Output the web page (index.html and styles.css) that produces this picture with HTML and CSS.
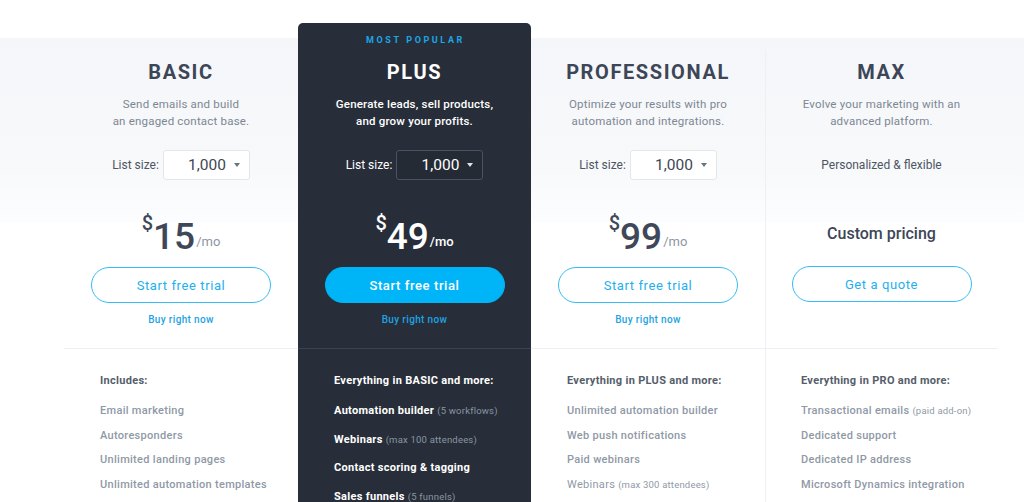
FILE: index.html
```html
<!DOCTYPE html>
<html lang="en">
<head>
<meta charset="utf-8">
<title>Pricing</title>
<link rel="stylesheet" href="styles.css">
</head>
<body>
<section class="pricing">
  <div class="plans">
    <div class="plan">
      <div class="plan-top">
        <div class="eyebrow"></div>
        <h2 class="plan-name">BASIC</h2>
        <p class="plan-desc">Send emails and build<br>an engaged contact base.</p>
        <div class="size-row"><span class="size-label">List size:</span><span class="select">1,000<i class="caret"></i></span></div>
        <div class="price"><span class="cur">$</span><span class="amt">15</span><span class="per">/mo</span></div>
        <a class="btn">Start free trial</a>
        <a class="buy">Buy right now</a>
      </div>
      <div class="features">
        <div class="feat-head">Includes:</div>
        <ul>
          <li>Email marketing</li>
          <li>Autoresponders</li>
          <li>Unlimited landing pages</li>
          <li>Unlimited automation templates</li>
        </ul>
      </div>
    </div>

    <div class="plan plan-dark">
      <div class="plan-top">
        <div class="eyebrow">MOST POPULAR</div>
        <h2 class="plan-name">PLUS</h2>
        <p class="plan-desc">Generate leads, sell products,<br>and grow your profits.</p>
        <div class="size-row"><span class="size-label">List size:</span><span class="select">1,000<i class="caret"></i></span></div>
        <div class="price"><span class="cur">$</span><span class="amt">49</span><span class="per">/mo</span></div>
        <a class="btn btn-fill">Start free trial</a>
        <a class="buy">Buy right now</a>
      </div>
      <div class="features">
        <div class="feat-head">Everything in BASIC and more:</div>
        <ul>
          <li>Automation builder <small>(5 workflows)</small></li>
          <li>Webinars <small>(max 100 attendees)</small></li>
          <li>Contact scoring &amp; tagging</li>
          <li>Sales funnels <small>(5 funnels)</small></li>
        </ul>
      </div>
    </div>

    <div class="plan">
      <div class="plan-top">
        <div class="eyebrow"></div>
        <h2 class="plan-name">PROFESSIONAL</h2>
        <p class="plan-desc">Optimize your results with pro<br>automation and integrations.</p>
        <div class="size-row"><span class="size-label">List size:</span><span class="select">1,000<i class="caret"></i></span></div>
        <div class="price"><span class="cur">$</span><span class="amt">99</span><span class="per">/mo</span></div>
        <a class="btn">Start free trial</a>
        <a class="buy">Buy right now</a>
      </div>
      <div class="features">
        <div class="feat-head">Everything in PLUS and more:</div>
        <ul>
          <li>Unlimited automation builder</li>
          <li>Web push notifications</li>
          <li>Paid webinars</li>
          <li class="light">Webinars <small>(max 300 attendees)</small></li>
        </ul>
      </div>
    </div>

    <div class="plan plan-max">
      <div class="plan-top">
        <div class="eyebrow"></div>
        <h2 class="plan-name">MAX</h2>
        <p class="plan-desc">Evolve your marketing with an<br>advanced platform.</p>
        <div class="size-row"><span class="flex-note">Personalized &amp; flexible</span></div>
        <div class="price"><span class="custom">Custom pricing</span></div>
        <a class="btn btn-quote">Get a quote</a>
        <span class="buy"></span>
      </div>
      <div class="features">
        <div class="feat-head">Everything in PRO and more:</div>
        <ul>
          <li>Transactional emails <small>(paid add-on)</small></li>
          <li>Dedicated support</li>
          <li>Dedicated IP address</li>
          <li>Microsoft Dynamics integration</li>
        </ul>
      </div>
    </div>
  </div>
</section>
</body>
</html>
```

FILE: styles.css
```css
* { box-sizing: border-box; }
html, body { margin: 0; padding: 0; }
body {
  background: #fff;
  font-family: Roboto, "Liberation Sans", Arial, sans-serif;
  color: #3d4656;
  height: 502px;
  overflow: hidden;
}
.pricing {
  padding-top: 23px;
  background: linear-gradient(to bottom, #fff 0, #fff 38px, #f4f6f9 38px, #f8f9fb 170px, #fcfdfe 222px, #fff 223px);
  min-height: 502px;
}
.plans {
  margin-left: 64px;
  display: grid;
  grid-template-columns: 234px 233px 234px 233px;
}
.plan { display: flex; flex-direction: column; }
.plan-top {
  display: flex;
  flex-direction: column;
  align-items: center;
  text-align: center;
  padding-top: 12px;
  height: 326px;
  border-bottom: 1px solid #edf1f7;
}
.eyebrow {
  height: 10px;
  font-size: 9px;
  line-height: 10px;
  font-weight: 700;
  letter-spacing: 2.6px;
  color: #1aa7e6;
  padding-left: 2px;
}
.plan-name {
  margin: 15px 0 0;
  font-size: 20px;
  line-height: 24px;
  font-weight: 700;
  letter-spacing: 1.6px;
  color: #3c4657;
}
.plan-desc {
  margin: 12px 0 0;
  font-size: 11.5px;
  line-height: 17px;
  color: #7d8794;
  letter-spacing: 0.2px;
}
.size-row {
  margin-top: 20px;
  height: 30px;
  display: flex;
  align-items: center;
  gap: 4px;
}
.size-label { font-size: 12px; color: #4d5562; }
.select {
  width: 87px;
  height: 30px;
  border: 1px solid #e3e7ed;
  border-radius: 3px;
  background: #fff;
  display: flex;
  align-items: center;
  justify-content: flex-end;
  padding-right: 9px;
  font-size: 15.5px;
  color: #3d4656;
  gap: 8px;
}
.caret {
  width: 0; height: 0;
  border-left: 3.5px solid transparent;
  border-right: 3.5px solid transparent;
  border-top: 4px solid #6b7482;
}
.flex-note { font-size: 12px; color: #4d5562; }
.price {
  margin-top: 31px;
  height: 40px;
  display: flex;
  align-items: flex-end;
  justify-content: center;
  color: #3f4859;
}
.cur { font-size: 20px; font-weight: 500; align-self: flex-start; line-height: 22px; margin-top: 1px; }
.amt { font-size: 37px; font-weight: 500; line-height: 40px; margin-bottom: -6px; }
.per { font-size: 13px; color: #8d97a4; line-height: 18px; margin-left: 1px; }
.custom { font-size: 16px; font-weight: 500; color: #3d4656; align-self: center; margin-top: 4px; }
.btn {
  margin-top: 16px;
  width: 180px;
  height: 36px;
  border: 1px solid #35bcf5;
  border-radius: 18px;
  display: flex;
  align-items: center;
  justify-content: center;
  font-size: 13px;
  letter-spacing: 0.6px;
  color: #22b0ee;
  cursor: pointer;
}
.btn-quote { margin-top: 15px; }
.btn-fill {
  background: #00b4f8;
  border-color: #00b4f8;
  color: #fff;
  font-weight: 500;
}
.buy {
  margin-top: 11px;
  font-size: 10px;
  line-height: 12px;
  height: 12px;
  color: #1ea3e3;
  font-weight: 500;
  letter-spacing: 0.35px;
}
.features {
  padding: 25px 0 0 36px;
  font-size: 11px;
  letter-spacing: 0.3px;
}
.feat-head {
  font-weight: 700;
  color: #555e6b;
  line-height: 14px;
}
.features ul { list-style: none; margin: 16px 0 0; padding: 0; }
.features li {
  line-height: 14px;
  height: 24.7px;
  font-weight: 500;
  color: #8f99a6;
}
.features li.light { font-weight: 400; }
.features small { font-size: 9.5px; font-weight: 400; letter-spacing: 0.2px; }
.plan-dark {
  background: #272e39;
  border-radius: 5px 5px 0 0;
}
.plan-dark .plan-top { border-bottom-color: #3a4350; }
.plan-dark .plan-name { color: #fff; }
.plan-dark .plan-desc { color: #fff; font-weight: 500; }
.plan-dark .size-label { color: #fff; }
.plan-dark .select {
  background: #252b35;
  border-color: #4a5361;
  color: #fff;
}
.plan-dark .caret { border-top-color: #dfe3e8; }
.plan-dark .price, .plan-dark .per { color: #fff; }
.plan-dark .per { font-weight: 500; }
.plan-dark .feat-head { color: #fff; }
.plan-dark li { color: #fff; font-weight: 700; height: 28.7px; }
.plan-dark small { color: #8b95a3; }
.plan-max {
  background: linear-gradient(#edf1f6, #edf1f6) left 27px / 1px 100% no-repeat;
}
```
